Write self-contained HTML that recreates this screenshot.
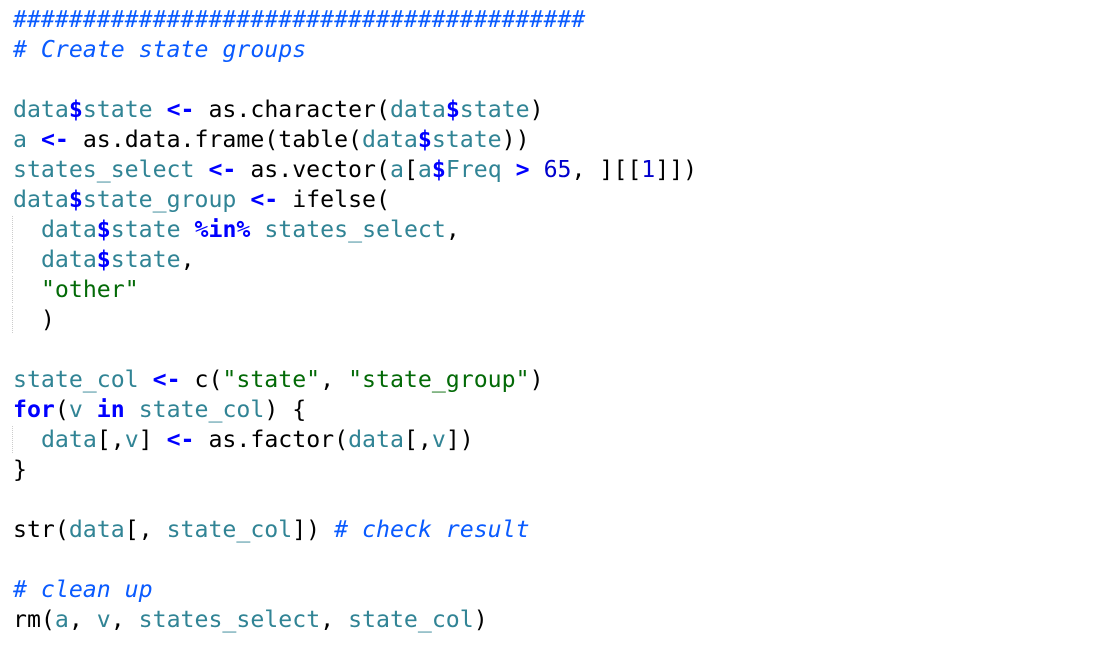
<!DOCTYPE html>
<html><head><meta charset="utf-8"><style>
html,body{margin:0;padding:0;background:#fff;width:1100px;height:656px;overflow:hidden}
pre{margin:0;padding:5px 0 0 13px;font-family:"DejaVu Sans Mono","Liberation Mono",monospace;font-size:23.2px;line-height:30px;color:#000}
.c{color:#0a5bff;font-style:italic}
.i{color:#318495}
.k{color:#0000ff;font-weight:bold}
.s{color:#036a07}
.n{color:#0000cd}
.g{border-left:1px dotted #ccc;margin-left:-1px}
</style></head><body>
<pre><span class="c">#########################################</span>
<span class="c"># Create state groups</span>

<span class="i">data</span><span class="k">$</span><span class="i">state</span> <span class="k">&lt;-</span> as.character(<span class="i">data</span><span class="k">$</span><span class="i">state</span>)
<span class="i">a</span> <span class="k">&lt;-</span> as.data.frame(table(<span class="i">data</span><span class="k">$</span><span class="i">state</span>))
<span class="i">states_select</span> <span class="k">&lt;-</span> as.vector(<span class="i">a</span>[<span class="i">a</span><span class="k">$</span><span class="i">Freq</span> <span class="k">&gt;</span> <span class="n">65</span>, ][[<span class="n">1</span>]])
<span class="i">data</span><span class="k">$</span><span class="i">state_group</span> <span class="k">&lt;-</span> ifelse(
<span class="g"> </span> <span class="i">data</span><span class="k">$</span><span class="i">state</span> <span class="k">%in%</span> <span class="i">states_select</span>,
<span class="g"> </span> <span class="i">data</span><span class="k">$</span><span class="i">state</span>,
<span class="g"> </span> <span class="s">"other"</span>
<span class="g"> </span> )

<span class="i">state_col</span> <span class="k">&lt;-</span> c(<span class="s">"state"</span>, <span class="s">"state_group"</span>)
<span class="k">for</span>(<span class="i">v</span> <span class="k">in</span> <span class="i">state_col</span>) {
<span class="g"> </span> <span class="i">data</span>[,<span class="i">v</span>] <span class="k">&lt;-</span> as.factor(<span class="i">data</span>[,<span class="i">v</span>])
}

str(<span class="i">data</span>[, <span class="i">state_col</span>]) <span class="c"># check result</span>

<span class="c"># clean up</span>
rm(<span class="i">a</span>, <span class="i">v</span>, <span class="i">states_select</span>, <span class="i">state_col</span>)
</pre>
</body></html>
